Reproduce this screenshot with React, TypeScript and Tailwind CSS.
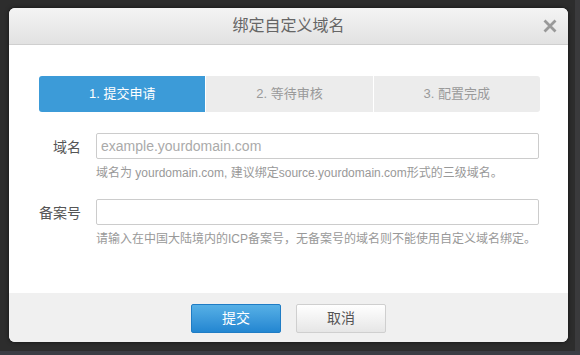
import React from "react";

const font = { fontFamily: '"Liberation Sans", "Noto Sans CJK SC", sans-serif' };

function Steps() {
  return (
    <div className="flex h-[36px] w-[501px] text-[13px]">
      <div className="flex flex-1 items-center justify-center rounded-l-[3px] bg-[#3c9bd8] text-white">
        1. 提交申请
      </div>
      <div className="flex flex-1 items-center justify-center border-l border-white bg-[#ececec] text-[#9a9a9a]">
        2. 等待审核
      </div>
      <div className="flex flex-1 items-center justify-center rounded-r-[3px] border-l border-white bg-[#ececec] text-[#9a9a9a]">
        3. 配置完成
      </div>
    </div>
  );
}

function Field({ label, placeholder, help }: { label: string; placeholder?: string; help: string }) {
  return (
    <div className="flex">
      <label className="w-[42px] shrink-0 pt-[4px] text-right text-[14px] whitespace-nowrap text-[#555]">
        {label}
      </label>
      <div className="ml-[15px] flex flex-col">
        <input
          className="h-[26px] w-[443px] rounded-[2px] border border-[#ccc] bg-white px-[4px] text-[14px] text-[#555] outline-none placeholder:text-[#aaa]"
          placeholder={placeholder}
          style={font}
        />
        <p className="mt-[6px] text-[12px] leading-[16px] whitespace-nowrap text-[#999]">{help}</p>
      </div>
    </div>
  );
}

export default function App() {
  return (
    <div className="relative h-[355px] w-[580px] overflow-hidden bg-[#2d2d2d]" style={font}>
      <div className="absolute top-0 right-0 h-full w-[5px] bg-[#3a3a3c]" />
      <div className="absolute bottom-0 left-0 h-[4px] w-full bg-[#3b3d44]" />
      <div className="ml-[9px] pt-[8px]">
        <div className="flex h-[334px] w-[559px] flex-col overflow-hidden rounded-[6px] bg-white shadow-[0_0_4px_rgba(0,0,0,0.6)]">
          {/* header */}
          <div className="relative flex h-[37px] shrink-0 items-center justify-center border-b border-[#cfcfcf] bg-gradient-to-b from-[#f4f4f4] to-[#e2e2e2]">
            <span className="text-[16px] text-[#666]">绑定自定义域名</span>
            <span className="absolute right-[8px] top-[8px] flex h-[20px] w-[20px] items-center justify-center">
              <svg width="14" height="14" viewBox="0 0 14 14">
                <path d="M1.5 1.5 L12.5 12.5 M12.5 1.5 L1.5 12.5" stroke="#999" strokeWidth="2.8" strokeLinecap="butt" />
              </svg>
            </span>
          </div>

          {/* body */}
          <div className="flex-1 px-[30px] pt-[31px]">
            <Steps />
            <div className="mt-[21px] flex flex-col gap-[18px]">
              <Field
                label="域名"
                placeholder="example.yourdomain.com"
                help="域名为 yourdomain.com, 建议绑定source.yourdomain.com形式的三级域名。"
              />
              <Field
                label="备案号"
                help="请输入在中国大陆境内的ICP备案号，无备案号的域名则不能使用自定义域名绑定。"
              />
            </div>
          </div>

          {/* footer */}
          <div className="flex h-[49px] shrink-0 items-start justify-center gap-[15px] bg-[#f0f0f0] pt-[11px]">
            <button className="h-[29px] w-[90px] rounded-[2px] border border-[#1f7cc4] bg-gradient-to-b from-[#56b0e6] to-[#2286d1] text-[14px] text-white">
              提交
            </button>
            <button className="h-[29px] w-[90px] rounded-[2px] border border-[#cfcfcf] bg-gradient-to-b from-[#ffffff] to-[#e6e6e6] text-[14px] text-[#555]">
              取消
            </button>
          </div>
        </div>
      </div>
    </div>
  );
}
